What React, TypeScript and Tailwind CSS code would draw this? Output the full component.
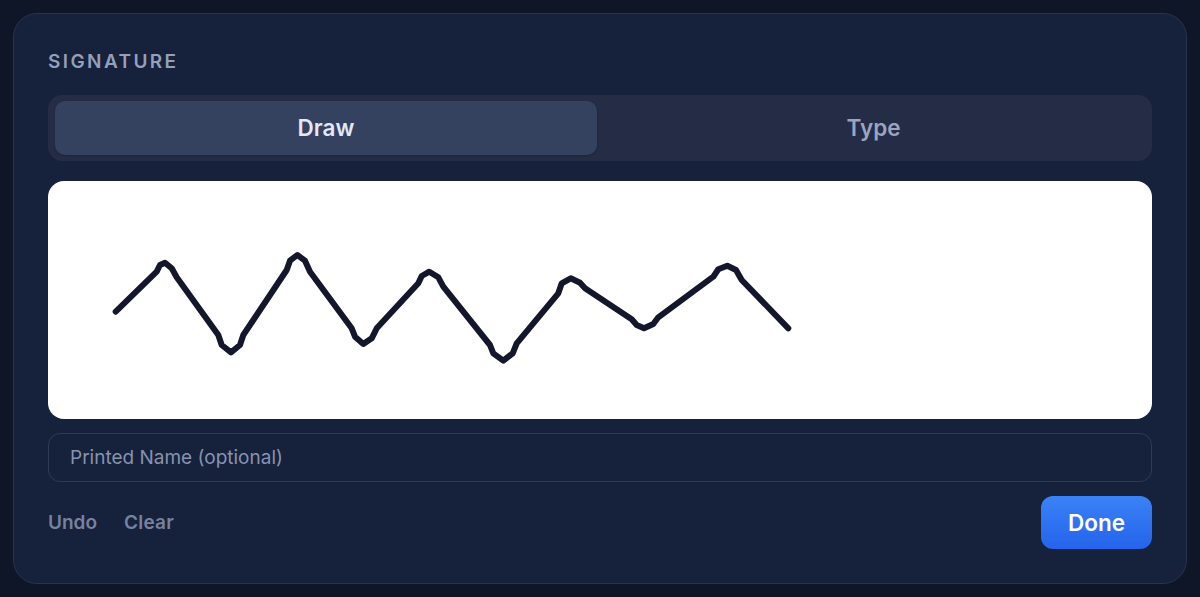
import React from "react";

const stroke =
  "115.7,311.7 156.7,271.7 160,265 165,262.7 171.7,268.3 176.7,277.3 218.3,335 221.7,345 231,352.3 240,345 243.3,335 286.7,270 290,260.7 297.3,255 305,260.7 310,271.7 351.7,328.3 355,336.7 363.3,344 371.7,338.3 376.7,328.3 418.3,283.3 421.7,276 429.3,271.7 438.3,277.3 443.3,286.7 490,345 493.3,353.3 503.3,360.7 512.7,353.3 516.7,343.3 558.3,293.3 561.7,283.3 570.7,278.3 580,282.7 585,288.3 631.7,319.3 636.7,325 644,328.3 653.3,324 658.3,317.3 713.3,276.7 718.3,269.3 727.3,265.7 736,270 741.7,280 788.3,328.3";

const App = () => {
  return (
    <div className="h-[597px] w-[1200px] overflow-hidden bg-[#0e1628] p-[13px] font-['Inter',sans-serif]">
      <div className="flex h-[571px] flex-col rounded-[24px] border border-[#28334d] bg-[#16213b] px-[34px] pt-[34px]">
        <div className="h-[27px] text-[19px] font-semibold leading-[27px] tracking-[2.4px] text-[#949fba]">
          SIGNATURE
        </div>

        <div className="mt-[20px] flex h-[66px] rounded-[14px] bg-[#252c45] py-[6px] pl-[7px] pr-[2px]">
          <button className="h-[54px] w-[542px] rounded-[10px] bg-[#34425f] text-[22.5px] font-semibold text-[#e2e8f5] shadow-[0_1px_2px_rgba(15,23,42,0.35)]">
            Draw
          </button>
          <button className="h-[54px] flex-1 text-[22.5px] font-semibold text-[#9aa5bf]">
            Type
          </button>
        </div>

        <div className="mt-[20px] h-[238px] rounded-[16px] bg-white">
          <svg className="h-full w-full" viewBox="48 181 1104 238">
            <polyline
              points={stroke}
              fill="none"
              stroke="#14172b"
              strokeWidth="6"
              strokeLinecap="round"
              strokeLinejoin="round"
            />
          </svg>
        </div>

        <input
          className="mt-[14px] h-[49px] w-full rounded-[12px] border border-[#2f3a55] bg-transparent px-[21px] text-[19px] text-[#e2e8f5] outline-none placeholder:text-[#8793af]"
          placeholder="Printed Name (optional)"
        />

        <div className="mt-[14px] flex items-center justify-between">
          <div className="flex gap-[27px] pt-[2px]">
            <button className="text-[19px] font-semibold text-[#76829f]">Undo</button>
            <button className="text-[19px] font-semibold tracking-[0.2px] text-[#76829f]">Clear</button>
          </div>
          <button className="h-[53px] w-[111px] rounded-[12px] bg-gradient-to-b from-[#3b82f6] to-[#2563eb] text-[22.5px] font-semibold text-white">
            Done
          </button>
        </div>
      </div>
    </div>
  );
};

export default App;
